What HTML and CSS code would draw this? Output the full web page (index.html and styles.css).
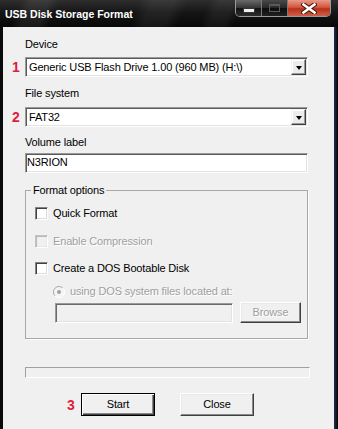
FILE: index.html
```html
<!DOCTYPE html>
<html>
<head>
<meta charset="utf-8">
<link rel="stylesheet" href="styles.css">
</head>
<body>
<div class="window">
  <div class="titlebar">
    <span class="title">USB Disk Storage Format</span>
    <div class="caption-buttons">
      <div class="cb cb-min"><span class="min-glyph"></span></div>
      <div class="cb cb-max"><span class="max-glyph"></span></div>
      <div class="cb cb-close">
        <svg width="16" height="11" viewBox="0 0 16 11"><path d="M2.5 1.5 L13.5 9.5 M13.5 1.5 L2.5 9.5" stroke="#4a1208" stroke-width="4.6" stroke-linecap="square"/><path d="M2.5 1.5 L13.5 9.5 M13.5 1.5 L2.5 9.5" stroke="#fff" stroke-width="2.6" stroke-linecap="square"/></svg>
      </div>
    </div>
  </div>
  <div class="client">
    <div class="lbl">Device</div>
    <div class="line">
      <span class="num">1</span>
      <div class="combo"><span class="combo-text">Generic USB Flash Drive 1.00 (960 MB) (H:\)</span><span class="drop"><span class="arrow"></span></span></div>
    </div>
    <div class="lbl lbl-fs">File system</div>
    <div class="line">
      <span class="num">2</span>
      <div class="combo"><span class="combo-text">FAT32</span><span class="drop"><span class="arrow"></span></span></div>
    </div>
    <div class="lbl lbl-vol">Volume label</div>
    <div class="line">
      <span class="num"></span>
      <div class="textbox">N3RION</div>
    </div>
    <fieldset class="group">
      <legend class="legend">Format options</legend>
      <div class="group-body">
        <div class="check"><span class="box"></span><span>Quick Format</span></div>
        <div class="check check-ec disabled"><span class="box"></span><span class="dis-text">Enable Compression</span></div>
        <div class="check check-dos"><span class="box"></span><span>Create a DOS Bootable Disk</span></div>
        <div class="radio-row">
          <svg class="radio" width="12" height="12" viewBox="0 0 12 12">
            <circle cx="6" cy="6" r="5.5" fill="#f4f4f4"/>
            <path d="M2.1 9.9 A5.5 5.5 0 0 1 9.9 2.1" stroke="#a8a8a8" stroke-width="1" fill="none"/>
            <path d="M9.9 2.1 A5.5 5.5 0 0 1 2.1 9.9" stroke="#ffffff" stroke-width="1" fill="none"/>
            <circle cx="6" cy="6" r="2" fill="#a0a0a0"/>
          </svg>
          <span class="dis-text">using DOS system files located at:</span>
        </div>
        <div class="path-row">
          <div class="pathbox"></div>
          <div class="btn btn-browse"><span class="dis-text">Browse</span></div>
        </div>
      </div>
    </fieldset>
    <div class="progress"></div>
    <div class="btnrow">
      <span class="num num3">3</span>
      <div class="btn btn-default">Start</div>
      <div class="btn btn-close">Close</div>
    </div>
  </div>
</div>
</body>
</html>
```
FILE: styles.css
```css
* { box-sizing: border-box; }
html, body { margin: 0; padding: 0; }
body {
  width: 338px;
  height: 429px;
  overflow: hidden;
  background: #000;
  font-family: "Liberation Sans", Arial, sans-serif;
  font-size: 11px;
  letter-spacing: -0.15px;
  color: #000;
}
.window {
  display: flex;
  flex-direction: column;
  height: 429px;
  background: linear-gradient(to right, #0a0a0a 0, #121212 98%, #1c2a44 99%, #050505 100%);
}
.titlebar {
  height: 27px;
  flex: none;
  display: flex;
  justify-content: space-between;
  align-items: flex-start;
  padding: 0 7px 0 5px;
  background:
    linear-gradient(112deg, transparent 0 6%, rgba(255,255,255,0.07) 9% 14%, transparent 17% 40%, rgba(255,255,255,0.06) 44% 50%, transparent 54% 60%, rgba(255,255,255,0.05) 63% 67%, transparent 70%),
    linear-gradient(to bottom, #2e2e2e 0%, #161616 45%, #070707 100%);
}
.title {
  color: #fff;
  font-weight: bold;
  font-size: 10.5px;
  letter-spacing: 0;
  line-height: 28px;
}
.caption-buttons {
  display: flex;
  height: 17px;
  border: 1px solid #9a9a9a;
  border-top: none;
  border-radius: 0 0 5px 5px;
  overflow: hidden;
}
.cb {
  height: 16px;
  display: flex;
  align-items: center;
  justify-content: center;
}
.cb-min {
  width: 26px;
  background: linear-gradient(to bottom, #6a6a6a 0%, #343434 50%, #121212 51%, #2e2e2e 100%);
  border-right: 1px solid #7a7a7a;
}
.cb-max {
  width: 26px;
  background: linear-gradient(to bottom, #4a4a4a 0%, #262626 50%, #0c0c0c 51%, #222 100%);
  border-right: 1px solid #7a7a7a;
}
.cb-close {
  width: 42px;
  background: linear-gradient(to bottom, #e89a88 0%, #d4563e 45%, #b8301a 55%, #d0604a 100%);
}
.min-glyph {
  width: 10px;
  height: 3px;
  margin-top: 4px;
  background: #f0f0f0;
  box-shadow: 0 0 0 1px #333;
}
.max-glyph {
  width: 11px;
  height: 8px;
  border: 1px solid #5a5a5a;
  border-top-width: 2px;
}
.client {
  flex: 1;
  margin: 0 4px 0 3px;
  background: #f0f0f0;
  padding: 11px 26px 0 6px;
}
.lbl {
  margin-left: 16px;
  line-height: 13px;
  margin-bottom: 6px;
}
.lbl-fs { margin-top: 10px; margin-bottom: 7px; }
.lbl-vol { margin-top: 9px; margin-bottom: 4px; }
.line {
  display: grid;
  grid-template-columns: 16px 283px;
  align-items: center;
}
.num {
  color: #e01c3e;
  font-weight: bold;
  font-size: 14px;
  letter-spacing: 0;
  line-height: 14px;
  padding-left: 3px;
}
.combo {
  height: 20px;
  display: flex;
  align-items: center;
  justify-content: space-between;
  background: #fff;
  padding: 1px;
  border: 1px solid;
  border-color: #9a9a9a #fff #fff #9a9a9a;
  box-shadow: inset 1px 1px 0 #5a5a5a, inset -1px -1px 0 #e3e3e3;
}
.combo-text {
  padding-left: 2px;
  line-height: 13px;
}
.drop {
  width: 15px;
  height: 16px;
  display: flex;
  align-items: center;
  justify-content: center;
  background: #ececec;
  border: 1px solid;
  border-color: #f4f4f4 #404040 #404040 #f4f4f4;
  box-shadow: inset -1px -1px 0 #9a9a9a, inset 1px 1px 0 #fff;
}
.arrow {
  width: 0;
  height: 0;
  border-left: 3.5px solid transparent;
  border-right: 3.5px solid transparent;
  border-top: 4px solid #000;
  margin-top: 1px;
}
.textbox {
  height: 20px;
  background: #fff;
  padding-left: 1px;
  line-height: 16px;
  border: 1px solid;
  border-color: #9a9a9a #fff #fff #9a9a9a;
  box-shadow: inset 1px 1px 0 #5a5a5a, inset -1px -1px 0 #e3e3e3;
}
.group {
  margin: 11px 0 0 16px;
  width: 283px;
  padding: 0 0 15px 0;
  border: 1px solid #a8a8a8;
  box-shadow: 1px 1px 0 #fff;
  min-width: 0;
}
.legend {
  margin-left: 5px;
  padding: 0 2px;
  line-height: 13px;
  background: #f0f0f0;
}
.group-body {
  padding: 10px 0 0 9px;
}
.check {
  display: flex;
  align-items: center;
  gap: 5px;
  height: 13px;
  line-height: 13px;
}
.check-ec { margin-top: 15px; }
.check-dos { margin-top: 14px; }
.box {
  width: 13px;
  height: 13px;
  flex: none;
  background: #fff;
  border: 1px solid;
  border-color: #848484 #fff #fff #848484;
  box-shadow: inset 1px 1px 0 #404040, inset -1px -1px 0 #dcdcdc;
}
.disabled .box {
  background: #f0f0f0;
  box-shadow: inset 1px 1px 0 #b8b8b8, inset -1px -1px 0 #e6e6e6;
  border-color: #c4c4c4 #fff #fff #c4c4c4;
}
.dis-text {
  color: #a0a0a0;
  text-shadow: 1px 1px 0 #fff;
}
.radio-row {
  display: flex;
  align-items: center;
  gap: 5px;
  height: 13px;
  margin-top: 10px;
  margin-left: 18px;
  line-height: 13px;
}
.radio { flex: none; }
.path-row {
  display: flex;
  align-items: flex-start;
  gap: 7px;
  height: 21px;
  margin-top: 4px;
  margin-left: 20px;
}
.pathbox {
  width: 178px;
  height: 20px;
  margin-top: 1px;
  background: #f0f0f0;
  border: 1px solid;
  border-color: #9a9a9a #fff #fff #9a9a9a;
  box-shadow: inset 1px 1px 0 #6a6a6a, inset -1px -1px 0 #e3e3e3;
}
.btn {
  display: flex;
  align-items: center;
  justify-content: center;
  background: #f0f0f0;
  border: 1px solid;
  border-color: #fff #404040 #404040 #fff;
  box-shadow: inset -1px -1px 0 #8a8a8a, inset 1px 1px 0 #e8e8e8;
  line-height: 13px;
}
.btn-browse {
  width: 61px;
  height: 21px;
}
.progress {
  margin: 28px 0 0 16px;
  width: 285px;
  height: 11px;
  border: 1px solid;
  border-color: #a0a0a0 #fff #fff #a0a0a0;
}
.btnrow {
  display: flex;
  align-items: center;
  margin-top: 15px;
  padding-left: 55px;
}
.num3 {
  width: 14px;
  padding-left: 3px;
}
.btn-default {
  width: 74px;
  height: 23px;
  margin-left: 3px;
  border: 1px solid #000;
  box-shadow: inset 1px 1px 0 #fff, inset -1px -1px 0 #404040, inset -2px -2px 0 #8a8a8a;
}
.btn-close {
  width: 74px;
  height: 23px;
  margin-left: 25px;
}
```
